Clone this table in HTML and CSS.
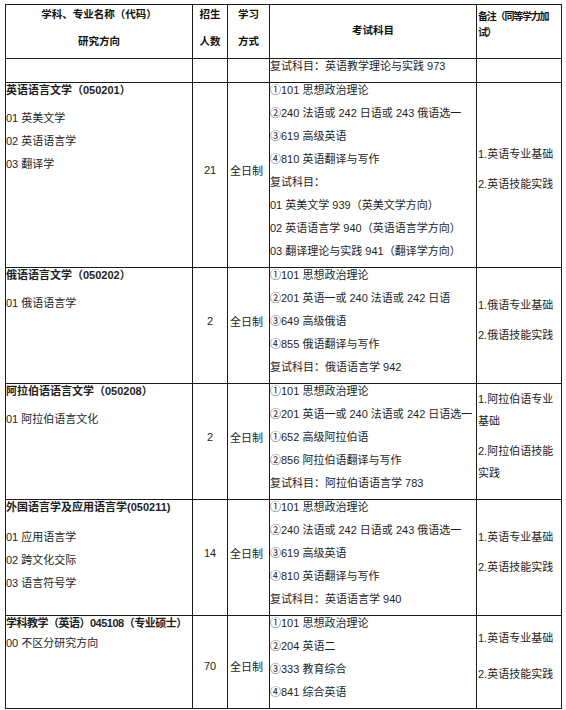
FILE: index.html
```html
<!DOCTYPE html>
<html lang="zh">
<head>
<meta charset="utf-8">
<title>招生目录</title>
<link rel="stylesheet" href="styles.css">
</head>
<body>
<div class="page">
<table class="grid">
  <colgroup>
    <col class="c-major">
    <col class="c-num">
    <col class="c-mode">
    <col class="c-exam">
    <col class="c-note">
  </colgroup>
  <thead>
    <tr class="head-row">
      <th class="h-major"><p>学科、专业名称（代码）</p><p>研究方向</p></th>
      <th class="h-num"><p>招生</p><p>人数</p></th>
      <th class="h-num"><p>学习</p><p>方式</p></th>
      <th class="h-exam">考试科目</th>
      <th class="h-note">备注（同等学力加试）</th>
    </tr>
  </thead>
  <tbody>
    <tr>
      <td></td>
      <td></td>
      <td></td>
      <td class="exam"><p>复试科目：英语教学理论与实践 973</p></td>
      <td></td>
    </tr>
    <tr>
      <td class="major">
        <p class="title">英语语言文学（050201）</p>
        <p>01 英美文学</p>
        <p>02 英语语言学</p>
        <p>03 翻译学</p>
      </td>
      <td class="num">21</td>
      <td class="mode">全日制</td>
      <td class="exam">
        <p>①101 思想政治理论</p>
        <p>②240 法语或 242 日语或 243 俄语选一</p>
        <p>③619 高级英语</p>
        <p>④810 英语翻译与写作</p>
        <p>复试科目：</p>
        <p>01 英美文学 939（英美文学方向）</p>
        <p>02 英语语言学 940（英语语言学方向）</p>
        <p>03 翻译理论与实践 941（翻译学方向）</p>
      </td>
      <td class="note"><p>1.英语专业基础</p><p>2.英语技能实践</p></td>
    </tr>
    <tr>
      <td class="major">
        <p class="title">俄语语言文学（050202）</p>
        <p>01 俄语语言学</p>
      </td>
      <td class="num">2</td>
      <td class="mode">全日制</td>
      <td class="exam">
        <p>①101 思想政治理论</p>
        <p>②201 英语一或 240 法语或 242 日语</p>
        <p>③649 高级俄语</p>
        <p>④855 俄语翻译与写作</p>
        <p>复试科目：俄语语言学 942</p>
      </td>
      <td class="note"><p>1.俄语专业基础</p><p>2.俄语技能实践</p></td>
    </tr>
    <tr>
      <td class="major">
        <p class="title">阿拉伯语语言文学（050208）</p>
        <p>01 阿拉伯语言文化</p>
      </td>
      <td class="num">2</td>
      <td class="mode">全日制</td>
      <td class="exam">
        <p>①101 思想政治理论</p>
        <p>②201 英语一或 240 法语或 242 日语选一</p>
        <p>①652 高级阿拉伯语</p>
        <p>②856 阿拉伯语翻译与写作</p>
        <p>复试科目：阿拉伯语语言学 783</p>
      </td>
      <td class="note note-wrap"><p>1.阿拉伯语专业基础</p><p>2.阿拉伯语技能实践</p></td>
    </tr>
    <tr>
      <td class="major major-wide">
        <p class="title">外国语言学及应用语言学(050211)</p>
        <p>01 应用语言学</p>
        <p>02 跨文化交际</p>
        <p>03 语言符号学</p>
      </td>
      <td class="num">14</td>
      <td class="mode">全日制</td>
      <td class="exam">
        <p>①101 思想政治理论</p>
        <p>②240 法语或 242 日语或 243 俄语选一</p>
        <p>③619 高级英语</p>
        <p>④810 英语翻译与写作</p>
        <p>复试科目：英语语言学 940</p>
      </td>
      <td class="note"><p>1.英语专业基础</p><p>2.英语技能实践</p></td>
    </tr>
    <tr class="last-row">
      <td class="major major-tight">
        <p class="title title-narrow">学科教学（英语）045108（专业硕士）</p>
        <p>00 不区分研究方向</p>
      </td>
      <td class="num">70</td>
      <td class="mode">全日制</td>
      <td class="exam">
        <p>①101 思想政治理论</p>
        <p>②204 英语二</p>
        <p>③333 教育综合</p>
        <p>④841 综合英语</p>
      </td>
      <td class="note note-loose"><p>1.英语专业基础</p><p>2.英语技能实践</p></td>
    </tr>
  </tbody>
</table>
</div>
</body>
</html>
```
FILE: styles.css
```css
html, body {
  margin: 0;
  padding: 0;
  background: #ffffff;
}

body {
  font-family: "Liberation Sans", "Noto Sans CJK SC", sans-serif;
  font-size: 11px;
  color: #1e1e1e;
}

.page {
  padding: 4px 0 0 5px;
}

.grid {
  border-collapse: collapse;
  table-layout: fixed;
  width: 557px;
}

.c-major { width: 187px; }
.c-num { width: 35px; }
.c-mode { width: 42px; }
.c-exam { width: 207px; }
.c-note { width: 85px; }

.grid th,
.grid td {
  border: 1px solid #1c1c1c;
  padding: 0;
  vertical-align: top;
  text-align: left;
}

.grid p {
  margin: 0;
}

/* header */
.head-row {
  height: 54px;
}

.grid th {
  font-size: 10.5px;
  font-weight: 700;
  color: #111;
}

.grid .h-major,
.grid .h-num {
  text-align: center;
  padding-top: 2px;
}

.h-major p,
.h-num p {
  line-height: 14px;
  margin-bottom: 13px;
}

.h-major p:last-child,
.h-num p:last-child {
  margin-bottom: 0;
}

.grid .h-exam {
  text-align: center;
  vertical-align: middle;
  padding-bottom: 4px;
}

.grid .h-note {
  font-size: 10px;
  letter-spacing: -1.2px;
  line-height: 16px;
  padding: 4px 2px 0 1px;
}

/* body cells */
.major {
  padding: 2px 0 0 2px;
}

.major p {
  line-height: 15px;
  margin-bottom: 8px;
}

.major .title {
  font-weight: 700;
  margin-bottom: 13px;
  white-space: nowrap;
}

.major-wide .title {
  margin-bottom: 15px;
}

.major-tight .title {
  margin-bottom: 5px;
}

.title-narrow {
  letter-spacing: -0.5px;
}

.grid .num {
  text-align: center;
  vertical-align: middle;
  padding-bottom: 10px;
}

.grid .mode {
  vertical-align: middle;
  padding: 0 0 10px 2px;
}

.last-row .num,
.last-row .mode {
  padding-top: 7px;
  padding-bottom: 0;
}

.exam {
  padding: 0 0 0 2px;
}

.exam p {
  line-height: 14px;
  margin-bottom: 9px;
  white-space: nowrap;
}

.grid .note {
  vertical-align: middle;
  padding: 0 1px 12px 1px;
}

.note p {
  line-height: 22px;
  margin-bottom: 8px;
}

.note p:last-child {
  margin-bottom: 0;
}

.note-loose p {
  margin-bottom: 14px;
}
```
